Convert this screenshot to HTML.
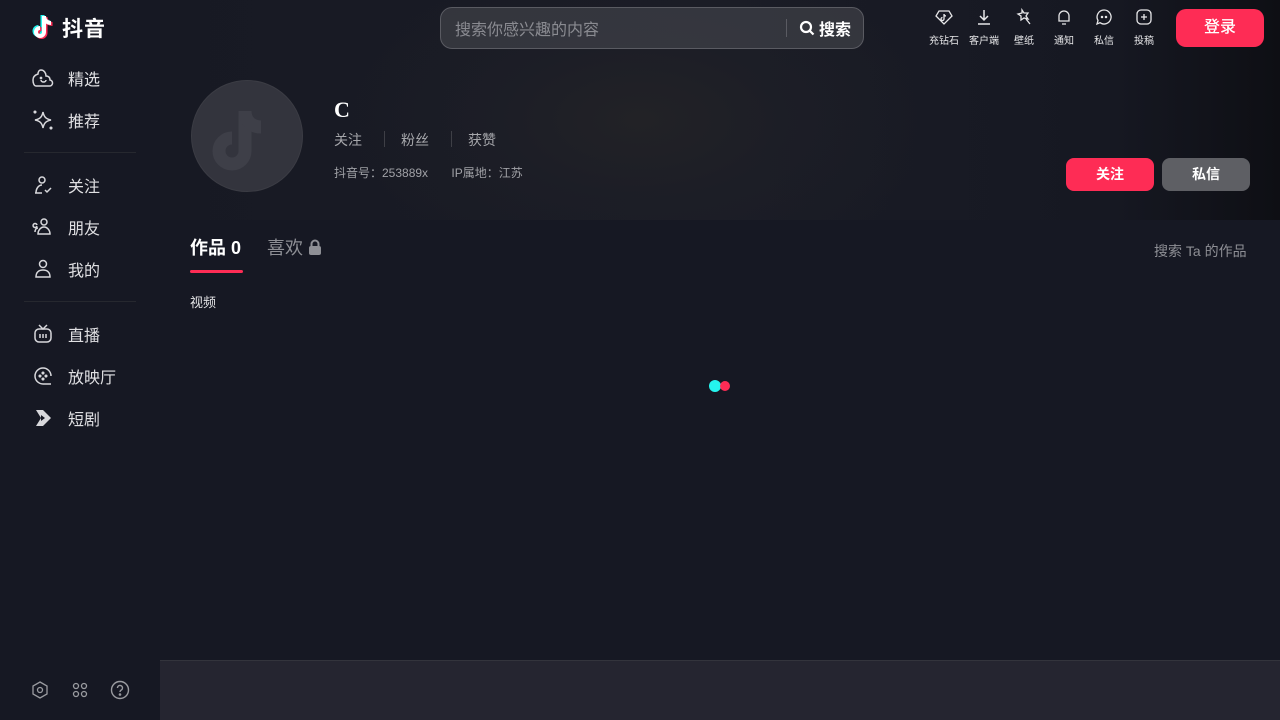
<!DOCTYPE html>
<html><head><meta charset="utf-8">
<style>
*{margin:0;padding:0;box-sizing:border-box}
body{width:1280px;height:720px;overflow:hidden;background:#161823;font-family:"Liberation Sans","Noto Sans CJK SC",sans-serif;color:#fff;position:relative}
.hero{position:absolute;left:160px;top:0;width:1120px;height:220px;background:radial-gradient(ellipse 300px 160px at 480px 120px,#222226 0%,rgba(30,31,38,0.6) 50%,rgba(22,24,35,0) 100%),linear-gradient(90deg,#171923 0%,#1a1c26 50%,#161822 85%,#0e0f14 100%)}
.side{position:absolute;left:0;top:0;width:160px;height:720px;background:#161823}
.logo{position:absolute;left:32px;top:13px;display:flex;align-items:center}
.logo span{font-size:21px;font-weight:bold;margin-left:4px;letter-spacing:1px}
.nav{position:absolute;left:32px;font-size:16px;color:#e0e0e3;display:flex;align-items:center}
.nav svg{width:22px;height:22px;margin-right:14px}
.sep{position:absolute;left:24px;width:112px;height:1px;background:#26282f}
.search{position:absolute;left:440px;top:7px;width:424px;height:42px;border:1px solid #5a5b62;border-radius:12px;background:rgba(70,71,78,0.6)}
.search .ph{position:absolute;left:14px;top:8px;font-size:16px;color:#8a8b91}
.search .bar{position:absolute;left:345px;top:11px;width:1px;height:18px;background:#5a5b62}
.search .btn{position:absolute;left:358px;top:8px;font-size:16px;font-weight:bold;display:flex;align-items:center}
.tool{position:absolute;top:8px;width:40px;text-align:center;font-size:10px;color:#e6e6e8}
.tool svg{width:18px;height:18px;display:block;margin:0 auto 6px}
.login{position:absolute;left:1176px;top:9px;width:88px;height:38px;border-radius:10px;background:#fe2c55;font-size:16px;text-align:center;line-height:38px;font-weight:500}
.avatar{position:absolute;left:191px;top:80px;width:112px;height:112px;border-radius:50%;background:#33343d;border:1px solid #3b3c44;overflow:hidden}
.name{position:absolute;left:334px;top:97px;font-family:"Liberation Serif",serif;font-size:22px;font-weight:bold}
.stats{position:absolute;left:334px;top:130px;font-size:14px;color:#a6a7ab;display:flex}
.stats span{padding-right:22px}
.stats i{display:inline-block;width:1px;height:16px;background:#3e3f46;margin-right:16px;margin-top:1px}
.info{position:absolute;left:334px;top:164px;font-size:12px;color:#a0a1a6}
.b{position:absolute;top:158px;width:88px;height:33px;border-radius:8px;text-align:center;line-height:33px;font-size:14px;font-weight:bold}
.tab1{position:absolute;left:190px;top:234px;font-size:18px;font-weight:bold}
.tab2{position:absolute;left:267px;top:234px;font-size:18px;color:#8e8f95}
.ul{position:absolute;left:190px;top:270px;width:53px;height:3px;background:#fe2c55;border-radius:2px}
.sub{position:absolute;left:190px;top:292px;font-size:13px;color:#e5e5e7}
.sta{position:absolute;left:1154px;top:241px;font-size:14px;color:#8e8f95}
.foot{position:absolute;left:160px;top:660px;width:1120px;height:60px;background:#252530;border-top:1px solid #33343c}
</style></head><body>
<div class="hero"></div>
<div class="side">
<div class="logo"><svg width="26" height="30" viewBox="0 0 26 30"><path d="M12 3v16a4 4 0 1 1-4-4" stroke="#25f4ee" stroke-width="4" fill="none" transform="translate(-1.5,-1)"/><path d="M12 3c0 4 3 7 7 7" stroke="#25f4ee" stroke-width="4" fill="none" transform="translate(-1.5,-1)"/><path d="M12 3v16a4 4 0 1 1-4-4" stroke="#fe2c55" stroke-width="4" fill="none" transform="translate(1.5,1)"/><path d="M12 3c0 4 3 7 7 7" stroke="#fe2c55" stroke-width="4" fill="none" transform="translate(1.5,1)"/><path d="M12 3v16a4 4 0 1 1-4-4M12 3c0 4 3 7 7 7" stroke="#fff" stroke-width="4" fill="none"/></svg><span>抖音</span></div>
<div class="nav" style="top:66px"><svg viewBox="0 0 22 22" fill="none" stroke="#d8d8dc" stroke-width="1.5"><path d="M4 19h13a3 3 0 0 0 1-6c0-3-2-4-4-4 0-3-2-6-5-6-2 0-3 2-3 4-3 1-5 3-5 6s1 6 3 6z"/><path d="M9 13a2.5 2 0 0 0 5 0"/><circle cx="9" cy="11" r=".6"/></svg>精选</div>
<div class="nav" style="top:108px"><svg viewBox="0 0 22 22" fill="none" stroke="#d8d8dc" stroke-width="1.5"><path d="M11 3c1 5 3 7 8 8-5 1-7 3-8 8-1-5-3-7-8-8 5-1 7-3 8-8z"/><circle cx="3" cy="3" r=".8"/><circle cx="19" cy="19" r=".8"/></svg>推荐</div>
<div class="sep" style="top:152px"></div>
<div class="nav" style="top:173px"><svg viewBox="0 0 22 22" fill="none" stroke="#d8d8dc" stroke-width="1.5"><circle cx="10" cy="6" r="3"/><path d="M4 19c0-5 3-8 6-8M3 19h7M13 16l2 2 4-4"/></svg>关注</div>
<div class="nav" style="top:215px"><svg viewBox="0 0 22 22" fill="none" stroke="#d8d8dc" stroke-width="1.5"><circle cx="12" cy="6" r="3"/><path d="M6 18c0-4 3-7 6-7s6 3 6 7zM5 10a2 2 0 1 1 0-1M3 16c0-2 1-4 3-4"/></svg>朋友</div>
<div class="nav" style="top:257px"><svg viewBox="0 0 22 22" fill="none" stroke="#d8d8dc" stroke-width="1.5"><circle cx="11" cy="6" r="3.5"/><path d="M4 19c0-5 3-7 7-7s7 2 7 7z"/></svg>我的</div>
<div class="sep" style="top:301px"></div>
<div class="nav" style="top:322px"><svg viewBox="0 0 22 22" fill="none" stroke="#d8d8dc" stroke-width="1.5"><rect x="3" y="6" width="16" height="13" rx="4"/><path d="M7 2l4 4 4-4M8 11v4M11 11v4M14 11v4"/></svg>直播</div>
<div class="nav" style="top:364px"><svg viewBox="0 0 22 22" fill="none" stroke="#d8d8dc" stroke-width="1.5"><path d="M19 19h-8a8 8 0 1 1 8-8"/><circle cx="11" cy="8" r=".8"/><circle cx="8" cy="11" r=".8"/><circle cx="14" cy="11" r=".8"/><circle cx="11" cy="14" r=".8"/></svg>放映厅</div>
<div class="nav" style="top:406px"><svg viewBox="0 0 22 22"><path d="M4 3h7l8 8-8 8H4l5-8z" fill="#d8d8dc"/><path d="M9 8l4 3-4 3z" fill="#161823"/></svg>短剧</div>
<svg style="position:absolute;left:31px;top:681px" width="18" height="18" viewBox="0 0 18 18" fill="none" stroke="#9a9ba0" stroke-width="1.3"><path d="M9 1l7 4v8l-7 4-7-4V5z"/><circle cx="9" cy="9" r="2.5"/></svg>
<svg style="position:absolute;left:71px;top:681px" width="18" height="18" viewBox="0 0 18 18" fill="none" stroke="#9a9ba0" stroke-width="1.3"><circle cx="5" cy="5" r="2.5"/><circle cx="13" cy="5" r="2.5"/><circle cx="5" cy="13" r="2.5"/><circle cx="13" cy="13" r="2.5"/></svg>
<svg style="position:absolute;left:110px;top:680px" width="20" height="20" viewBox="0 0 20 20" fill="none" stroke="#9a9ba0" stroke-width="1.4"><circle cx="10" cy="10" r="8.5"/><path d="M7.5 8a2.5 2.5 0 1 1 3.5 2.2c-.7.4-1 .8-1 1.8"/><circle cx="10" cy="14.5" r=".6"/></svg>
</div>

<div class="search"><div class="ph">搜索你感兴趣的内容</div><div class="bar"></div><div class="btn"><svg width="16" height="16" viewBox="0 0 16 16" fill="none" stroke="#fff" stroke-width="2.2" style="margin-right:4px"><circle cx="7" cy="7" r="5"/><path d="M11 11l3.5 3.5"/></svg>搜索</div></div>

<div class="tool" style="left:924px"><svg viewBox="0 0 18 18" fill="none" stroke="#e6e6e8" stroke-width="1.3"><path d="M4 3h10l3 5-8 8-8-8z"/><path d="M9 6v5a1.5 1.5 0 1 1-1.5-1.5M9 6c0 1 1 2 2 2"/></svg>充钻石</div>
<div class="tool" style="left:964px"><svg viewBox="0 0 18 18" fill="none" stroke="#e6e6e8" stroke-width="1.5"><path d="M9 2v10M5 8l4 4 4-4M3 16h12"/></svg>客户端</div>
<div class="tool" style="left:1004px"><svg viewBox="0 0 18 18" fill="none" stroke="#e6e6e8" stroke-width="1.3"><path d="M7 2l2 3 4 0-2 3 2 3-4-1-3 2 0-4-3-2 4-1zM11 11l4 5"/></svg>壁纸</div>
<div class="tool" style="left:1044px"><svg viewBox="0 0 18 18" fill="none" stroke="#e6e6e8" stroke-width="1.3"><path d="M4 13V8a5 5 0 0 1 10 0v5zM7 16h4"/></svg>通知</div>
<div class="tool" style="left:1084px"><svg viewBox="0 0 18 18" fill="none" stroke="#e6e6e8" stroke-width="1.3"><path d="M9 2a7 7 0 1 1-4 12.7L2 16l1-3.5A7 7 0 0 1 9 2z"/><circle cx="7" cy="9" r=".6"/><circle cx="11" cy="9" r=".6"/></svg>私信</div>
<div class="tool" style="left:1124px"><svg viewBox="0 0 18 18" fill="none" stroke="#e6e6e8" stroke-width="1.3"><rect x="2" y="2" width="14" height="14" rx="4"/><path d="M9 6v6M6 9h6"/></svg>投稿</div>
<div class="login">登录</div>

<div class="avatar"><svg width="112" height="112" viewBox="0 0 112 112"><path d="M53 30v40a13 13 0 1 1-13-13" stroke="#3e3f48" stroke-width="13" fill="none"/><path d="M53 30c0 9 6 16 16 16" stroke="#3e3f48" stroke-width="13" fill="none"/></svg></div>
<div class="name">C</div>
<div class="stats"><span>关注</span><i></i><span>粉丝</span><i></i><span>获赞</span></div>
<div class="info">抖音号：253889x&nbsp;&nbsp;&nbsp;&nbsp;&nbsp;&nbsp;&nbsp;IP属地：江苏</div>
<div class="b" style="left:1066px;background:#fe2c55">关注</div>
<div class="b" style="left:1162px;background:#5e5f64">私信</div>

<div class="tab1">作品 0</div>
<div class="tab2">喜欢 <svg width="14" height="16" viewBox="0 0 14 16" style="vertical-align:-1px"><path d="M3.5 7V5a3.5 3.5 0 0 1 7 0v2" stroke="#8e8f95" stroke-width="2" fill="none"/><rect x="1" y="7" width="12" height="9" rx="2" fill="#8e8f95"/></svg></div>
<div class="ul"></div>
<div class="sub">视频</div>
<div class="sta">搜索 Ta 的作品</div>
<div style="position:absolute;left:709px;top:380px;width:12px;height:12px;border-radius:50%;background:#25f4ee"></div>
<div style="position:absolute;left:720px;top:381px;width:10px;height:10px;border-radius:50%;background:#fe2c55"></div>
<div class="foot"></div>
</body></html>
